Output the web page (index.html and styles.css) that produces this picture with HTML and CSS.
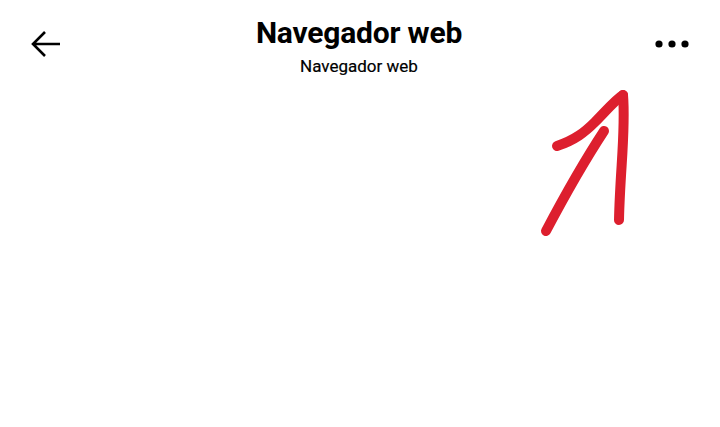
FILE: index.html
```html
<!DOCTYPE html>
<html>
<head>
<meta charset="utf-8">
<link rel="stylesheet" href="styles.css">
</head>
<body>
<div class="page">
  <header class="bar">
    <div class="btn back">
      <svg width="36" height="36" viewBox="0 0 36 36"><path d="M32 18H5M17 6L5 18l12 12" fill="none" stroke="#000" stroke-width="2.6" stroke-linecap="butt"/></svg>
    </div>
    <div class="titles">
      <div class="title">Navegador web</div>
      <div class="subtitle">Navegador web</div>
    </div>
    <div class="btn more">
      <svg width="36" height="10" viewBox="0 0 36 10"><circle cx="5" cy="5" r="3.6"/><circle cx="18" cy="5" r="3.6"/><circle cx="31" cy="5" r="3.6"/></svg>
    </div>
  </header>
  <svg class="scribble" width="720" height="427" viewBox="0 0 720 427">
    <g fill="none" stroke="#dd1f2e" stroke-width="10" stroke-linecap="round" stroke-linejoin="round">
      <path d="M623 95 C626 130 620 170 619 220"/>
      <path d="M557 146 C575 140 585 132 595 122 C605 112 615 100 623 95"/>
      <path d="M604 131 C585 160 565 195 546 231"/>
    </g>
  </svg>
</div>
</body>
</html>
```
FILE: styles.css
```css
html, body {
  margin: 0;
  padding: 0;
  background: #fff;
}
.page {
  width: 720px;
  height: 427px;
  position: relative;
  font-family: Roboto, "Liberation Sans", sans-serif;
  color: #000;
}
.bar {
  display: flex;
  align-items: flex-start;
  justify-content: space-between;
  padding: 14px 30px 0 28px;
}
.btn {
  width: 36px;
  display: flex;
  justify-content: center;
}
.back {
  margin-top: 12px;
}
.more {
  margin-top: 25px;
}
.titles {
  display: flex;
  flex-direction: column;
  align-items: center;
}
.title {
  font-size: 30px;
  font-weight: 700;
  line-height: 38px;
  letter-spacing: -0.2px;
}
.subtitle {
  font-size: 17px;
  line-height: 20px;
  margin-top: 4px;
  -webkit-text-stroke: 0.2px #000;
}
.scribble {
  position: absolute;
  left: 0;
  top: 0;
}
```
